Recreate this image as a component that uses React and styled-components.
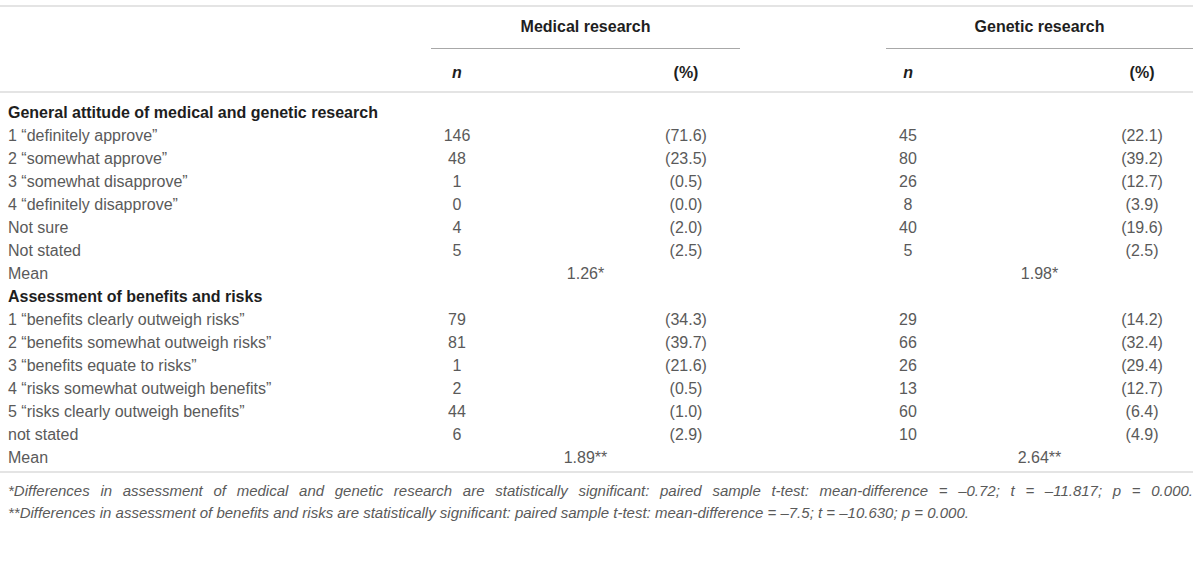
import React from "react";
import styled, { createGlobalStyle } from "styled-components";

const GlobalStyle = createGlobalStyle`
  body {
    margin: 0;
    background: #fff;
    font-family: "Liberation Sans", Arial, sans-serif;
  }
`;

const sections = [
  {
    title: "General attitude of medical and genetic research",
    rows: [
      ["1 “definitely approve”", "146", "(71.6)", "45", "(22.1)"],
      ["2 “somewhat approve”", "48", "(23.5)", "80", "(39.2)"],
      ["3 “somewhat disapprove”", "1", "(0.5)", "26", "(12.7)"],
      ["4 “definitely disapprove”", "0", "(0.0)", "8", "(3.9)"],
      ["Not sure", "4", "(2.0)", "40", "(19.6)"],
      ["Not stated", "5", "(2.5)", "5", "(2.5)"],
    ],
    mean: ["1.26*", "1.98*"],
  },
  {
    title: "Assessment of benefits and risks",
    rows: [
      ["1 “benefits clearly outweigh risks”", "79", "(34.3)", "29", "(14.2)"],
      ["2 “benefits somewhat outweigh risks”", "81", "(39.7)", "66", "(32.4)"],
      ["3 “benefits equate to risks”", "1", "(21.6)", "26", "(29.4)"],
      ["4 “risks somewhat outweigh benefits”", "2", "(0.5)", "13", "(12.7)"],
      ["5 “risks clearly outweigh benefits”", "44", "(1.0)", "60", "(6.4)"],
      ["not stated", "6", "(2.9)", "10", "(4.9)"],
    ],
    mean: ["1.89**", "2.64**"],
  },
];

function App() {
  return (
    <Page>
      <GlobalStyle />
      <Table>
        <colgroup>
          <col style={{ width: 431 }} />
          <col style={{ width: 52 }} />
          <col style={{ width: 257 }} />
          <col style={{ width: 146 }} />
          <col style={{ width: 44 }} />
          <col style={{ width: 263 }} />
        </colgroup>
        <thead>
          <tr>
            <GroupHead />
            <GroupHead colSpan={2} $ruled>
              Medical research
            </GroupHead>
            <GroupHead />
            <GroupHead colSpan={2} $ruled>
              Genetic research
            </GroupHead>
          </tr>
          <tr>
            <SubHead />
            <SubHead>
              <em>n</em>
            </SubHead>
            <SubHead $pad={149}>(%)</SubHead>
            <SubHead />
            <SubHead>
              <em>n</em>
            </SubHead>
            <SubHead $pad={161}>(%)</SubHead>
          </tr>
        </thead>
        <Body>
          {sections.map((section) => (
            <React.Fragment key={section.title}>
              <tr>
                <SectionTitle colSpan={6}>{section.title}</SectionTitle>
              </tr>
              {section.rows.map(([label, mn, mp, gn, gp]) => (
                <tr key={label}>
                  <Label>{label}</Label>
                  <Num>{mn}</Num>
                  <Num $pad={149}>{mp}</Num>
                  <Num />
                  <Num>{gn}</Num>
                  <Num $pad={161}>{gp}</Num>
                </tr>
              ))}
              <tr>
                <Label>Mean</Label>
                <Num colSpan={2}>{section.mean[0]}</Num>
                <Num />
                <Num colSpan={2}>{section.mean[1]}</Num>
              </tr>
            </React.Fragment>
          ))}
        </Body>
      </Table>
      <Notes>
        <Note $justify>
          *Differences in assessment of medical and genetic research are
          statistically significant: paired sample t-test: mean-difference =
          –0.72; t = –11.817; p = 0.000.
        </Note>
        <Note>
          **Differences in assessment of benefits and risks are statistically
          significant: paired sample t-test: mean-difference = –7.5; t =
          –10.630; p = 0.000.
        </Note>
      </Notes>
    </Page>
  );
}

const Page = styled.div`
  width: 1193px;
  padding-top: 5px;
`;

const Table = styled.table`
  width: 1193px;
  table-layout: fixed;
  border-collapse: separate;
  border-spacing: 0;
  border-top: 2px solid #e4e4e4;
  border-bottom: 2px solid #e4e4e4;
`;

const GroupHead = styled.th`
  padding: 10px 0 11px;
  line-height: 20px;
  font-size: 16px;
  font-weight: bold;
  color: #1e1e1e;
  text-align: center;
  border-bottom: 1px solid ${(p) => (p.$ruled ? "#a8a8a8" : "transparent")};
`;

const SubHead = styled.th`
  padding: 14px 0 8px ${(p) => p.$pad || 0}px;
  line-height: 20px;
  font-size: 16px;
  font-weight: bold;
  color: #1e1e1e;
  text-align: center;
  border-bottom: 2px solid #e4e4e4;
  & em {
    font-style: italic;
  }
`;

const Body = styled.tbody`
  & tr:first-child td {
    padding-top: 8px;
  }
  & tr:last-child td {
    padding-bottom: 2px;
  }
`;

const SectionTitle = styled.td`
  padding: 0 0 0 8px;
  line-height: 23px;
  font-size: 16px;
  font-weight: bold;
  color: #1e1e1e;
  text-align: left;
`;

const Label = styled.td`
  padding: 0 0 0 8px;
  line-height: 23px;
  font-size: 16px;
  color: #5a5a5a;
  white-space: nowrap;
`;

const Num = styled.td`
  padding: 0 0 0 ${(p) => p.$pad || 0}px;
  line-height: 23px;
  font-size: 16px;
  color: #5a5a5a;
  text-align: center;
  white-space: nowrap;
`;

const Notes = styled.div`
  padding: 7px 0 0 8px;
`;

const Note = styled.p`
  margin: 0;
  font-size: 15px;
  line-height: 22px;
  font-style: italic;
  color: #5a5a5a;
  text-align: ${(p) => (p.$justify ? "justify" : "left")};
  text-align-last: ${(p) => (p.$justify ? "justify" : "auto")};
`;

export default App;
